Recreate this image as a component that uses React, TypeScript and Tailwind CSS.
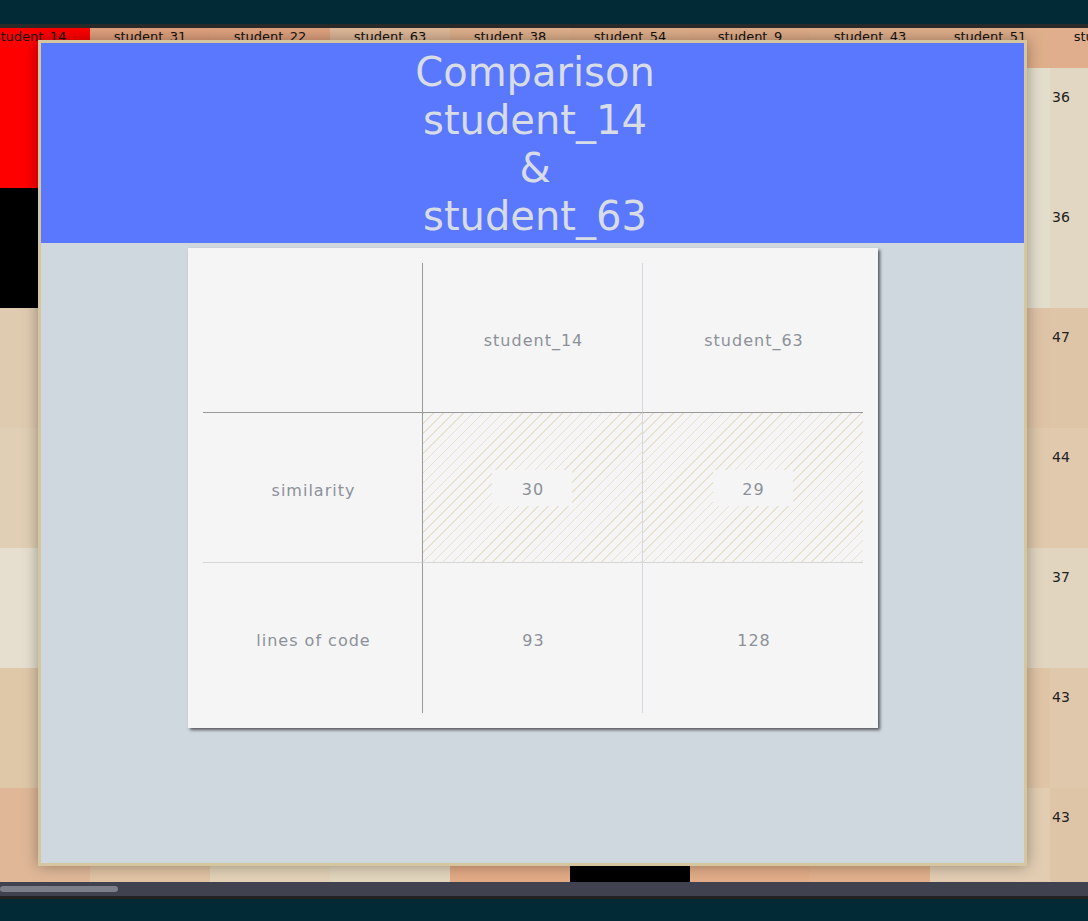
import React from "react";

const students = [
  "student_14",
  "student_31",
  "student_22",
  "student_63",
  "student_38",
  "student_54",
  "student_9",
  "student_43",
  "student_51",
  "student_27",
];

const headerColors = [
  "#ff0000",
  "#e0a07c",
  "#e0a27e",
  "#deb898",
  "#dfb08c",
  "#dfae8a",
  "#dfac88",
  "#dfae8a",
  "#dfae8a",
  "#e0ae8c",
];

// rows x cols, only the edges really show behind the dialog
const cellColors = [
  ["#ff0000", "#e2c8a8", "#e0c0a0", "#e3d0b4", "#dfc0a0", "#e2cdb2", "#e0c4a4", "#e3d2b8", "#e3ddcc", "#e2d7c3"],
  ["#000000", "#e0c4a4", "#e3d2b8", "#000000", "#e2cdb2", "#dfc0a0", "#e3d0b4", "#e0c8a8", "#e3ddcc", "#e2d7c3"],
  ["#dfcbb0", "#e3d2b8", "#dfc0a0", "#e2cdb2", "#e0c4a4", "#e3d6be", "#dfc6a8", "#e2aa85", "#dfc3a6", "#dfc5a7"],
  ["#e0cfb4", "#e2aa85", "#e3d6be", "#e0c4a4", "#e3d2b8", "#dfc0a0", "#e2cdb2", "#e3d0b4", "#dfc8ab", "#e0c9ad"],
  ["#e6dfd0", "#e3d0b4", "#e2cdb2", "#dfc0a0", "#e2aa85", "#e3d2b8", "#e0c4a4", "#e3d6be", "#e2d5c0", "#e1d5c0"],
  ["#dfc8a8", "#dfc0a0", "#e0c4a4", "#e3d6be", "#e2cdb2", "#e2aa85", "#e3d2b8", "#dfc6a8", "#dfc4a6", "#dfc8ab"],
  ["#e0b898", "#e0c4a4", "#e3d2b8", "#e3d6be", "#e2aa85", "#000000", "#e2ad88", "#e2b08c", "#e2cdb2", "#dfc5a7"],
];

const cellValues = [
  [0, 41, 38, 30, 35, 33, 40, 37, 39, 36],
  [29, 44, 36, 0, 31, 42, 38, 35, 40, 36],
  [33, 37, 45, 32, 39, 34, 41, 46, 47, 47],
  [35, 46, 33, 39, 36, 44, 31, 38, 43, 44],
  [32, 38, 40, 45, 47, 36, 42, 33, 37, 37],
  [36, 42, 39, 34, 40, 48, 35, 41, 44, 43],
  [38, 39, 36, 33, 46, 0, 47, 45, 40, 43],
];

const hatch =
  "bg-[repeating-linear-gradient(135deg,#e8e1cf_0px,#e8e1cf_1px,transparent_1px,transparent_7px)]";

function Heatmap() {
  return (
    <div className="h-[854px] overflow-hidden">
      <div className="-ml-[30px] grid w-[1200px] grid-cols-[repeat(10,120px)]">
        {students.map((s, i) => (
          <div
            key={s}
            className="h-[40px] pt-[1px] text-center text-[13px] leading-[16px] text-[#111]"
            style={{ backgroundColor: headerColors[i] }}
          >
            {s}
          </div>
        ))}
        {cellColors.map((row, r) =>
          row.map((c, i) => (
            <div
              key={r + "-" + i}
              className="h-[120px] pl-[2px] pt-[19px] text-[14px] leading-[20px] text-[#222]"
              style={{ backgroundColor: c }}
            >
              {cellValues[r][i] || ""}
            </div>
          ))
        )}
      </div>
    </div>
  );
}

function Value({ v }: { v: string }) {
  return (
    <div className="flex h-[36px] w-[80px] items-center justify-center bg-[#f5f5f5] pl-[2px] pt-[4px]">
      {v}
    </div>
  );
}

function ComparisonCard() {
  const cell = "flex items-center justify-center pl-[3px] pt-[6px]";
  const hcell = "flex items-center justify-center";
  return (
    <div className="mx-auto mt-[5px] w-[690px] bg-[#f5f5f5] p-[15px] shadow-[2px_2px_3px_rgba(0,0,0,0.6)]">
      <div className="grid h-[450px] w-[660px] grid-cols-3 grid-rows-3 text-[16px] tracking-[1px] text-[#8c9199]">
        <div className={cell + " border-b border-r border-[#999]"}></div>
        <div className={cell + " border-b border-r border-b-[#999] border-r-[#d3d8dc]"}>student_14</div>
        <div className={cell + " border-b border-[#999]"}>student_63</div>

        <div className={cell + " border-b border-r border-b-[#d6d6d6] border-r-[#999]"}>similarity</div>
        <div className={hcell + " border-b border-r border-b-[#d6d6d6] border-r-[#d3d8dc] " + hatch}>
          <Value v="30" />
        </div>
        <div className={hcell + " border-b border-[#d6d6d6] " + hatch}>
          <Value v="29" />
        </div>

        <div className={cell + " border-r border-[#999]"}>lines of code</div>
        <div className={cell + " border-r border-[#d3d8dc]"}>93</div>
        <div className={cell}>128</div>
      </div>
    </div>
  );
}

export default function App() {
  return (
    <div className="relative h-[921px] w-[1088px] overflow-hidden bg-[#022a36] font-['DejaVu_Sans',sans-serif]">
      <div className="h-[24px]" />
      <div className="h-[4px] bg-[#2a2a2a]" />
      <Heatmap />
      <div className="flex h-[14px] items-center bg-[#41424f]">
        <div className="h-[6px] w-[118px] rounded-full bg-[#7c7f8a]" />
      </div>
      <div className="h-[3px] bg-[#222]" />

      {/* comparison dialog */}
      <div className="absolute left-[38px] top-[40px] flex h-[826px] w-[989px] flex-col border-[3px] border-[#d5c6a0] shadow-[0_0_14px_rgba(0,0,0,0.35)]">
        <div className="flex h-[200px] shrink-0 flex-col items-center justify-center bg-[#5a78fe] pl-[5px] pt-[1px] text-[40px] leading-[48px] text-[#d8dce6]">
          <div>Comparison</div>
          <div>student_14</div>
          <div>&amp;</div>
          <div>student_63</div>
        </div>
        <div className="flex-1 bg-[#d0d8df]">
          <ComparisonCard />
        </div>
      </div>
    </div>
  );
}
